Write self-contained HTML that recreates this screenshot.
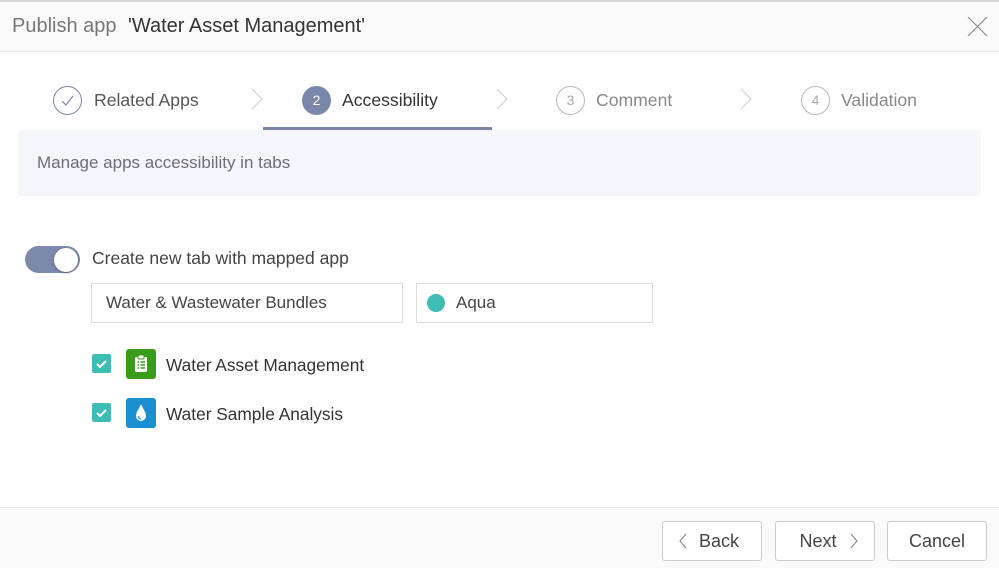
<!DOCTYPE html>
<html><head><style>
*{box-sizing:border-box;margin:0;padding:0}
body{width:999px;height:568px;background:#fff;font-family:"Liberation Sans",sans-serif;position:relative;overflow:hidden;color:#333}
.a{position:absolute}
.hdr{left:0;top:0;width:999px;height:52px;background:#fafafa;border-top:2px solid #d8d8d8;border-bottom:1px solid #e6e6e6}
.circ{width:29px;height:29px;border-radius:50%;border:1px solid #bbb;text-align:center;line-height:27px;font-size:14px;color:#aaa}
.lbl{font-size:17.6px;top:90px}
.inp{border:1px solid #ddd;height:40px;font-size:17px;line-height:38px;padding-left:14px;color:#444}
.cb{width:19px;height:19px;background:#3dbdb3;border-radius:2px}
.btn{top:521px;width:100px;height:40px;border:1px solid #ccc;border-radius:3px;background:#fff;font-size:18px;line-height:38px;text-align:center;color:#444}
</style></head><body>
<div class="a hdr"></div>
<div class="a" style="left:12px;top:15px;font-size:20px;color:#777">Publish app</div>
<div class="a" style="left:128px;top:15px;font-size:20px;color:#333">'Water Asset Management'</div>
<svg class="a" style="left:967px;top:16px" width="21" height="21"><path d="M1 1L20 20M20 1L1 20" stroke="#888" stroke-width="1.1"/></svg>

<div class="a circ" style="left:53px;top:86px;border-color:#7b87a8"><svg width="27" height="27"><path d="M8 14l4 4 7-9" fill="none" stroke="#7b87a8" stroke-width="1.2"/></svg></div>
<div class="a lbl" style="left:94px;color:#555">Related Apps</div>
<svg class="a" style="left:250px;top:88px" width="14" height="22"><path d="M2 1l10 10-10 10" fill="none" stroke="#ccc" stroke-width="1"/></svg>
<div class="a circ" style="left:302px;top:86px;background:#7b87a8;border-color:#7b87a8;color:#fff">2</div>
<div class="a lbl" style="left:342px;color:#333">Accessibility</div>
<svg class="a" style="left:495px;top:88px" width="14" height="22"><path d="M2 1l10 10-10 10" fill="none" stroke="#ccc" stroke-width="1"/></svg>
<div class="a circ" style="left:556px;top:86px">3</div>
<div class="a lbl" style="left:596px;color:#888">Comment</div>
<svg class="a" style="left:739px;top:88px" width="14" height="22"><path d="M2 1l10 10-10 10" fill="none" stroke="#ccc" stroke-width="1"/></svg>
<div class="a circ" style="left:801px;top:86px">4</div>
<div class="a lbl" style="left:841px;color:#888">Validation</div>
<div class="a" style="left:263px;top:127px;width:229px;height:3px;background:#7b87a8"></div>

<div class="a" style="left:18px;top:130px;width:963px;height:66px;background:#f4f6f9;border-radius:4px"></div>
<div class="a" style="left:37px;top:153px;font-size:17px;color:#6b6f78">Manage apps accessibility in tabs</div>

<div class="a" style="left:25px;top:246px;width:55px;height:27px;border-radius:14px;background:#7c89ab"></div>
<div class="a" style="left:54px;top:248px;width:24px;height:24px;border-radius:50%;background:#fff;box-shadow:0 1px 2px rgba(0,0,0,.3)"></div>
<div class="a" style="left:92px;top:248px;font-size:17.5px;color:#444">Create new tab with mapped app</div>

<div class="a inp" style="left:91px;top:283px;width:312px">Water &amp; Wastewater Bundles</div>
<div class="a inp" style="left:416px;top:283px;width:237px;padding-left:39px">Aqua</div>
<div class="a" style="left:427px;top:294px;width:18px;height:18px;border-radius:50%;background:#3dbdb3"></div>

<div class="a cb" style="left:92px;top:354px"><svg width="19" height="19"><path d="M5 10l3 3 6-6" fill="none" stroke="#fff" stroke-width="2"/></svg></div>
<div class="a" style="left:126px;top:349px;width:30px;height:30px;background:#3a9a1a;border-radius:3px"><svg width="30" height="30"><rect x="9" y="8" width="12" height="15" rx="1.5" fill="#fff"/><rect x="12" y="6" width="6" height="4" rx="1" fill="#fff" stroke="#3a9a1a"/><path d="M11.5 13h1.5M14.5 13h4.5M11.5 16h1.5M14.5 16h4.5M11.5 19h1.5M14.5 19h4.5" stroke="#3a9a1a" stroke-width="1.5"/></svg></div>
<div class="a" style="left:166px;top:355px;font-size:17.3px;color:#333">Water Asset Management</div>
<div class="a cb" style="left:92px;top:403px"><svg width="19" height="19"><path d="M5 10l3 3 6-6" fill="none" stroke="#fff" stroke-width="2"/></svg></div>
<div class="a" style="left:126px;top:398px;width:30px;height:30px;background:#1a8fd0;border-radius:3px"><svg width="30" height="30"><path d="M15 6C13 11 10 14 10 18a5 5 0 0 0 10 0c0-4-3-7-5-12z" fill="#fff"/><path d="M13 18a2 2 0 0 0 2 3" fill="none" stroke="#1a8fd0" stroke-width="1.2"/></svg></div>
<div class="a" style="left:166px;top:404px;font-size:17.3px;color:#333">Water Sample Analysis</div>

<div class="a" style="left:0;top:507px;width:999px;height:61px;background:#fafafa;border-top:1px solid #e8e8e8"></div>
<div class="a btn" style="left:662px;padding-left:14px">Back</div>
<svg class="a" style="left:678px;top:533px" width="10" height="16"><path d="M8 1L2 8l6 7" fill="none" stroke="#888" stroke-width="1.1"/></svg>
<div class="a btn" style="left:775px;padding-right:14px">Next</div>
<svg class="a" style="left:849px;top:533px" width="10" height="16"><path d="M2 1l6 7-6 7" fill="none" stroke="#888" stroke-width="1.1"/></svg>
<div class="a btn" style="left:887px">Cancel</div>
</body></html>
